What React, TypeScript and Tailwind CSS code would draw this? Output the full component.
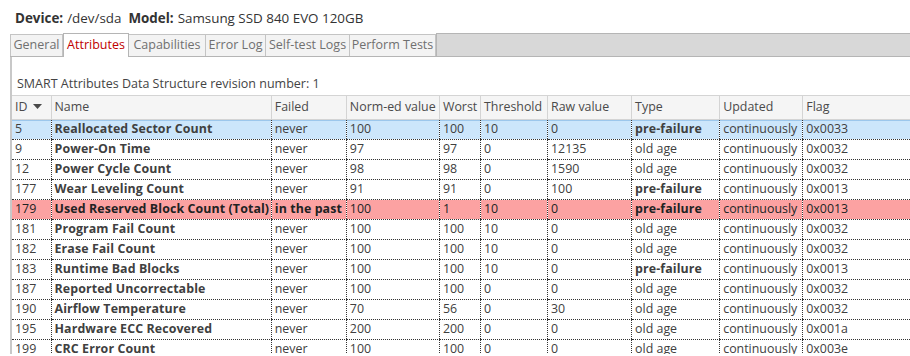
import React from "react";

type Row = {
  id: number;
  name: string;
  failed: string;
  norm: number;
  worst: number;
  thresh: number;
  raw: number;
  type: string;
  updated: string;
  flag: string;
  state?: "selected" | "failed";
};

const rows: Row[] = [
  { id: 5, name: "Reallocated Sector Count", failed: "never", norm: 100, worst: 100, thresh: 10, raw: 0, type: "pre-failure", updated: "continuously", flag: "0x0033", state: "selected" },
  { id: 9, name: "Power-On Time", failed: "never", norm: 97, worst: 97, thresh: 0, raw: 12135, type: "old age", updated: "continuously", flag: "0x0032" },
  { id: 12, name: "Power Cycle Count", failed: "never", norm: 98, worst: 98, thresh: 0, raw: 1590, type: "old age", updated: "continuously", flag: "0x0032" },
  { id: 177, name: "Wear Leveling Count", failed: "never", norm: 91, worst: 91, thresh: 0, raw: 100, type: "pre-failure", updated: "continuously", flag: "0x0013" },
  { id: 179, name: "Used Reserved Block Count (Total)", failed: "in the past", norm: 100, worst: 1, thresh: 10, raw: 0, type: "pre-failure", updated: "continuously", flag: "0x0013", state: "failed" },
  { id: 181, name: "Program Fail Count", failed: "never", norm: 100, worst: 100, thresh: 10, raw: 0, type: "old age", updated: "continuously", flag: "0x0032" },
  { id: 182, name: "Erase Fail Count", failed: "never", norm: 100, worst: 100, thresh: 10, raw: 0, type: "old age", updated: "continuously", flag: "0x0032" },
  { id: 183, name: "Runtime Bad Blocks", failed: "never", norm: 100, worst: 100, thresh: 10, raw: 0, type: "pre-failure", updated: "continuously", flag: "0x0013" },
  { id: 187, name: "Reported Uncorrectable", failed: "never", norm: 100, worst: 100, thresh: 0, raw: 0, type: "old age", updated: "continuously", flag: "0x0032" },
  { id: 190, name: "Airflow Temperature", failed: "never", norm: 70, worst: 56, thresh: 0, raw: 30, type: "old age", updated: "continuously", flag: "0x0032" },
  { id: 195, name: "Hardware ECC Recovered", failed: "never", norm: 200, worst: 200, thresh: 0, raw: 0, type: "old age", updated: "continuously", flag: "0x001a" },
  { id: 199, name: "CRC Error Count", failed: "never", norm: 100, worst: 100, thresh: 0, raw: 0, type: "old age", updated: "continuously", flag: "0x003e" },
];

const tabs = ["General", "Attributes", "Capabilities", "Error Log", "Self-test Logs", "Perform Tests"];
const tabWidths = ["w-[53px]", "w-[66px]", "w-[77px]", "w-[60px]", "w-[84px]", "w-[86px]"];

const headers = ["ID", "Name", "Failed", "Norm-ed value", "Worst", "Threshold", "Raw value", "Type", "Updated", "Flag"];
const colWidths = [39, 220, 75, 93, 41, 67, 84, 88, 83, 109];

function Cell({ children, first, bold }: { children: React.ReactNode; first?: boolean; bold?: boolean }) {
  return (
    <td
      className={
        "h-[20px] overflow-hidden whitespace-nowrap border-b border-dotted border-b-[#333] px-[3px] py-0 align-middle " +
        (first ? "" : "border-l border-l-[#333] ") +
        (bold ? "font-bold tracking-[0.1px]" : "")
      }
    >
      {children}
    </td>
  );
}

export default function App() {
  return (
    <div className="h-[356px] w-[910px] overflow-hidden bg-white font-['Open_Sans',sans-serif] text-[12.4px] text-[#404040]">
      <div className="flex h-[33px] items-center pl-[15px] pt-[3px] text-[13.4px] text-[#333]">
        <span className="font-bold">Device:</span>
        <span className="ml-1">/dev/sda</span>
        <span className="ml-[7px] font-bold">Model:</span>
        <span className="ml-1">Samsung SSD 840 EVO 120GB</span>
      </div>

      <div className="ml-[10px]">
        <div className="flex h-[24px] items-end border-b border-[#b5b5b5]">
          {tabs.map((t, i) =>
            i === 1 ? (
              <div
                key={t}
                className={`${tabWidths[i]} -mb-px flex h-[24px] items-center justify-center border border-b-0 border-[#b5b5b5] bg-white text-[12.5px] text-[#c00000]`}
              >
                {t}
              </div>
            ) : (
              <div
                key={t}
                className={`${tabWidths[i]} flex h-[22px] items-center justify-center border-t border-r border-[#c4c4c4] ${i === 0 ? "border-l" : ""} bg-[#f3f3f3] text-[12.5px] text-[#707070]`}
              >
                {t}
              </div>
            )
          )}
          <div className="h-[23px] flex-1 border-t border-l border-[#b5b5b5] bg-[#d8d8d8]" />
        </div>

        <div className="h-[297px] overflow-hidden border-l-[2px] border-[#c8c8c8]">
          <div className="pl-[5px] pt-[18px] pb-[3px] text-[12.5px] leading-[17px] text-[#444]">
            SMART Attributes Data Structure revision number: 1
          </div>
          <table className="w-[900px] table-fixed border-collapse">
            <colgroup>
              {colWidths.map((w, i) => (
                <col key={i} style={{ width: w }} />
              ))}
            </colgroup>
            <thead>
              <tr className="h-[24px] bg-[#f5f5f5]">
                {headers.map((h, i) => (
                  <th
                    key={h}
                    className={
                      "whitespace-nowrap border-t border-b border-[#d4d4d4] px-[3px] text-left font-normal text-[#4a4a4a] " +
                      (i > 0 ? "border-l" : "")
                    }
                  >
                    {i === 0 ? (
                      <span className="flex items-center">
                        ID
                        <svg width="9" height="6" viewBox="0 0 9 6" className="ml-[6px]">
                          <path d="M0 0 H9 L4.5 5 Z" fill="#4a4a4a" />
                        </svg>
                      </span>
                    ) : (
                      h
                    )}
                  </th>
                ))}
              </tr>
            </thead>
            <tbody>
              {rows.map((r) => (
                <tr
                  key={r.id}
                  className={
                    r.state === "selected"
                      ? "bg-[#cce6fb] shadow-[inset_0_1px_0_#9cc7ec]"
                      : r.state === "failed"
                        ? "bg-[#fca2a2] text-[#222]"
                        : "bg-white"
                  }
                >
                  <Cell first>{r.id}</Cell>
                  <Cell bold>{r.name}</Cell>
                  <Cell bold={r.state === "failed"}>{r.failed}</Cell>
                  <Cell>{r.norm}</Cell>
                  <Cell>{r.worst}</Cell>
                  <Cell>{r.thresh}</Cell>
                  <Cell>{r.raw}</Cell>
                  <Cell bold={r.type === "pre-failure"}>{r.type}</Cell>
                  <Cell>{r.updated}</Cell>
                  <Cell>{r.flag}</Cell>
                </tr>
              ))}
            </tbody>
          </table>
        </div>
      </div>
    </div>
  );
}
